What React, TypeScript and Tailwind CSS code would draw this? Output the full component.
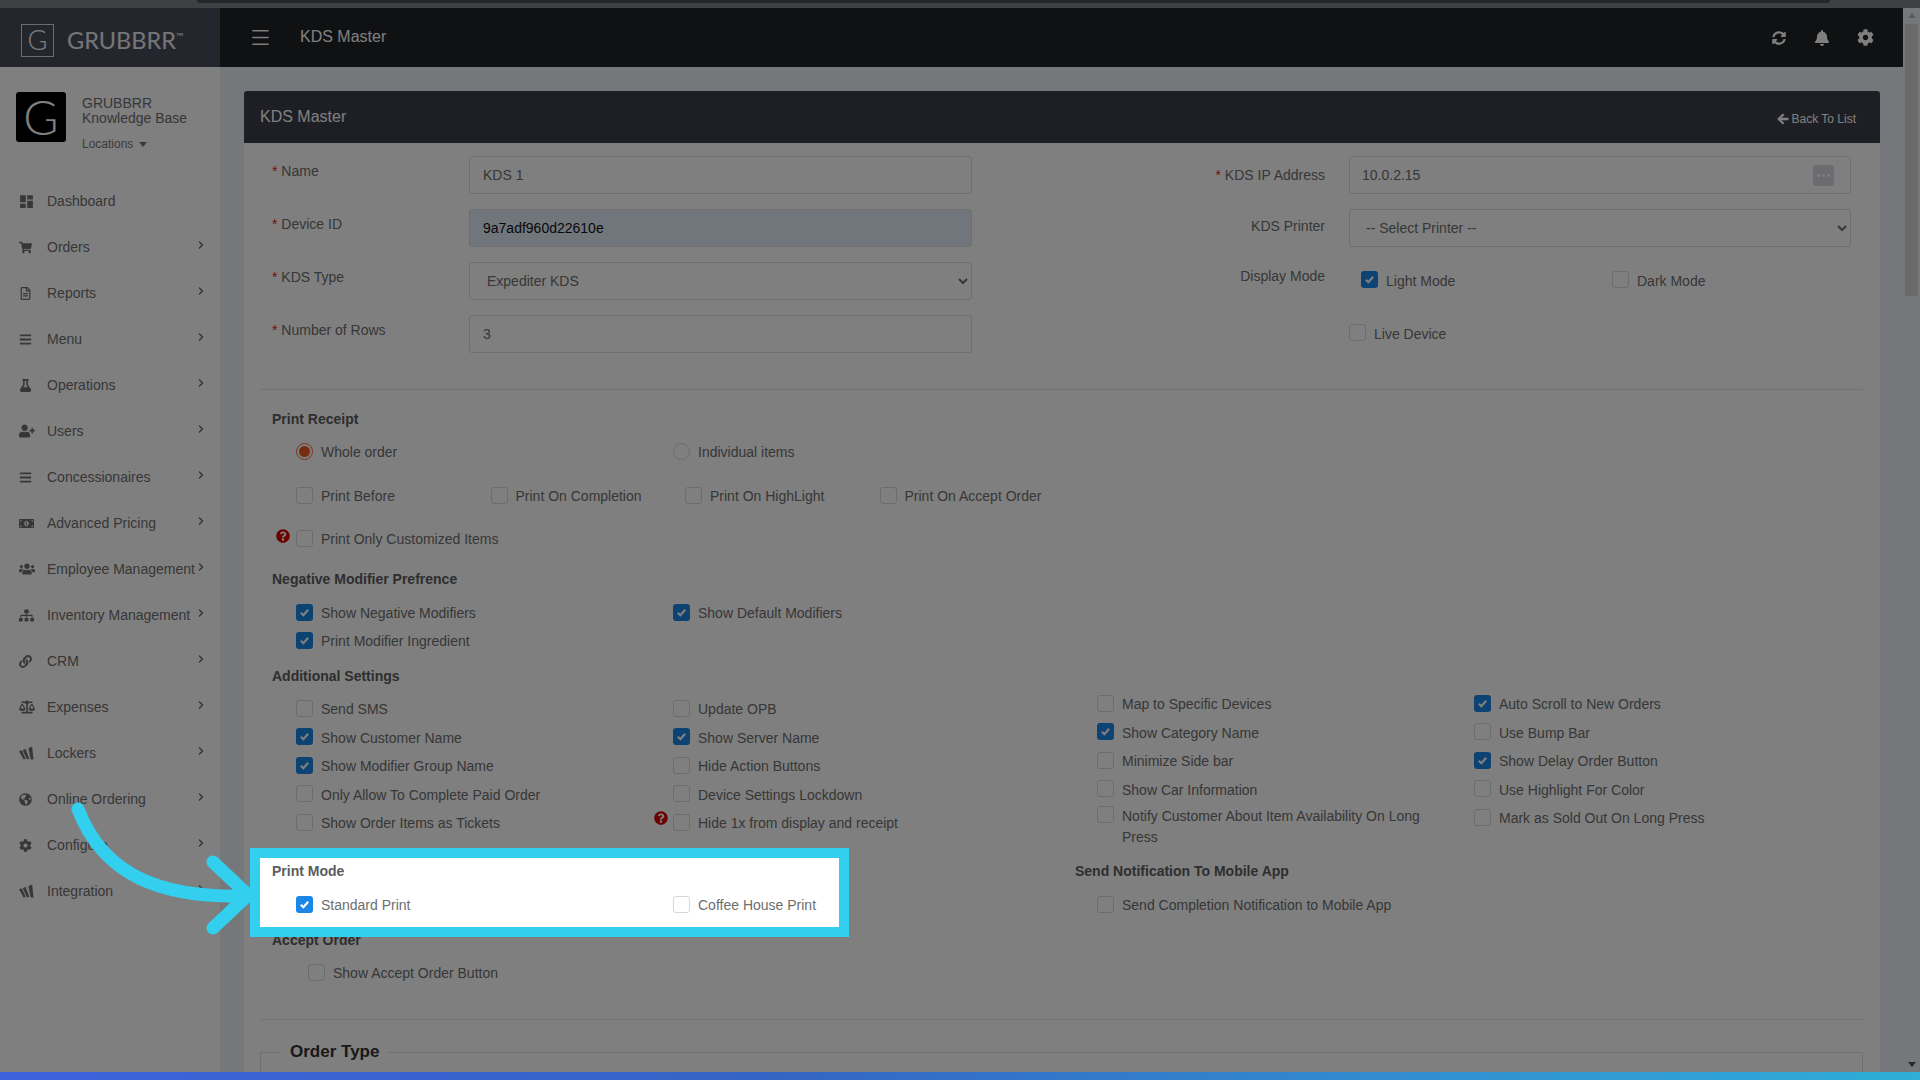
import React from "react";
import { ChevronRight, Menu } from "lucide-react";
import {
  FaArrowLeft,
  FaBalanceScale,
  FaBars,
  FaBell,
  FaCog,
  FaFlask,
  FaGlobeAmericas,
  FaLink,
  FaMoneyBillAlt,
  FaQuestionCircle,
  FaRegFileAlt,
  FaShoppingCart,
  FaSitemap,
  FaSyncAlt,
  FaUserPlus,
  FaUsers,
} from "react-icons/fa";
import { MdDashboard } from "react-icons/md";

const WIcon = () => (
  <svg viewBox="0 0 16 14" className="w-[15px] h-[14px]" fill="currentColor">
    <path d="M0 5 L3 4 L7 13 L5 14 Z" />
    <path d="M4 4 L7 2.5 L11 13 L8.5 14 Z" />
    <path d="M10 2 L14 0 L15.5 14 L12.5 14 Z" />
  </svg>
);

const navItems = [
  { label: "Dashboard", icon: <MdDashboard size={17} className="-ml-px" />, arrow: false },
  { label: "Orders", icon: <FaShoppingCart size={13} />, arrow: true },
  { label: "Reports", icon: <FaRegFileAlt size={13} />, arrow: true },
  { label: "Menu", icon: <FaBars size={13} />, arrow: true },
  { label: "Operations", icon: <FaFlask size={13} />, arrow: true },
  { label: "Users", icon: <FaUserPlus size={16} />, arrow: true },
  { label: "Concessionaires", icon: <FaBars size={13} />, arrow: true },
  { label: "Advanced Pricing", icon: <FaMoneyBillAlt size={15} />, arrow: true },
  { label: "Employee Management", icon: <FaUsers size={16} />, arrow: true },
  { label: "Inventory Management", icon: <FaSitemap size={15} />, arrow: true },
  { label: "CRM", icon: <FaLink size={13} />, arrow: true },
  { label: "Expenses", icon: <FaBalanceScale size={16} />, arrow: true },
  { label: "Lockers", icon: <WIcon />, arrow: true },
  { label: "Online Ordering", icon: <FaGlobeAmericas size={13} />, arrow: true },
  { label: "Configure", icon: <FaCog size={13} />, arrow: true },
  { label: "Integration", icon: <WIcon />, arrow: true },
];

const Check = ({ on = false }: { on?: boolean }) =>
  on ? (
    <span className="flex justify-center items-center bg-[#1b86e6] rounded-[3px] w-[17px] h-[17px] shrink-0">
      <svg viewBox="0 0 12 12" className="w-[11px] h-[11px]" fill="none" stroke="white" strokeWidth="2.4">
        <path d="M2 6.2 L4.8 9 L10 3" />
      </svg>
    </span>
  ) : (
    <span className="bg-white border border-[#d8d8d8] rounded-[3px] w-[17px] h-[17px] shrink-0" />
  );

const Radio = ({ on = false }: { on?: boolean }) => (
  <span
    className={`flex justify-center items-center rounded-full border w-[17px] h-[17px] shrink-0 ${
      on ? "border-[#f0673a]" : "border-[#d8d8d8]"
    }`}
  >
    {on && <span className="bg-[#f0591f] rounded-full w-[11px] h-[11px]" />}
  </span>
);

const Opt = ({ label, on }: { label: string; on?: boolean }) => (
  <div className="flex items-center gap-2 h-full">
    <Check on={on} />
    <span className="pt-[2px] text-[#6e6e6e] text-sm">{label}</span>
  </div>
);

const Heading = ({ children, className = "" }: { children: React.ReactNode; className?: string }) => (
  <div className={`flex items-center h-5 font-bold text-[#5c5c5c] text-sm ${className}`}>{children}</div>
);

const Req = ({ label }: { label: string }) => (
  <span className="text-[#6e6e6e] text-sm">
    <span className="text-[#e02020]">* </span>
    {label}
  </span>
);

const Field = ({ label, value, autofill }: { label: string; value: string; autofill?: boolean }) => (
  <div className="flex h-[53px]">
    <div className="pt-[3px] w-[197px]">
      <Req label={label} />
    </div>
    <input
      readOnly
      defaultValue={value}
      className={`pr-3 pl-[13px] border border-[#dedede] rounded-[3px] w-[503px] h-[38px] text-sm ${
        autofill ? "bg-[#e3ecf8] text-[#111]" : "bg-white text-[#6e6e6e]"
      }`}
    />
  </div>
);

const col1 = [
  { label: "Send SMS" },
  { label: "Show Customer Name", on: true },
  { label: "Show Modifier Group Name", on: true },
  { label: "Only Allow To Complete Paid Order" },
  { label: "Show Order Items as Tickets" },
];
const col2 = [
  { label: "Update OPB" },
  { label: "Show Server Name", on: true },
  { label: "Hide Action Buttons" },
  { label: "Device Settings Lockdown" },
];
const col3 = [
  { label: "Map to Specific Devices" },
  { label: "Show Category Name", on: true },
  { label: "Minimize Side bar" },
  { label: "Show Car Information" },
];
const col4 = [
  { label: "Auto Scroll to New Orders", on: true },
  { label: "Use Bump Bar" },
  { label: "Show Delay Order Button", on: true },
  { label: "Use Highlight For Color" },
  { label: "Mark as Sold Out On Long Press" },
];

const Sidebar = () => (
  <aside className="bg-white w-[220px] h-full shrink-0">
    <div className="flex items-center gap-[13px] bg-[#484c5c] pl-[21px] h-[59px]">
      <span className="flex justify-center items-center mt-[6px] border border-white/80 w-[33px] h-[33px] font-light text-[27px] text-white [font-family:Lato,sans-serif]">
        G
      </span>
      <span className="mt-[6px] text-[23.5px] text-white/90 [font-family:Lato,sans-serif]">
        GRUBBRR<sup className="top-[-9px] text-[10px]">™</sup>
      </span>
    </div>
    <div className="flex gap-4 pt-[25px] pl-4">
      <span className="flex justify-center items-center bg-black rounded-[3px] w-[50px] h-[50px] font-light text-[48px] text-white [font-family:Lato,sans-serif]">
        G
      </span>
      <div className="text-[#6e6e6e]">
        <div className="mt-1 text-sm leading-[15px]">GRUBBRR</div>
        <div className="text-sm leading-[15px]">Knowledge Base</div>
        <div className="flex items-center gap-[6px] mt-[11px] text-[#777] text-xs leading-[15px]">
          Locations
          <span className="border-x-[4px] border-x-transparent border-t-[5px] border-t-[#777]" />
        </div>
      </div>
    </div>
    <nav className="mt-[26px]">
      {navItems.map((item) => (
        <div key={item.label} className="flex items-center pl-[19px] h-[46px] text-[#6e6e6e]">
          <span className="flex items-center w-[28px] shrink-0">{item.icon}</span>
          <span className="text-sm whitespace-nowrap">{item.label}</span>
          {item.arrow && (
            <ChevronRight className="mt-[-4px] mr-[13px] ml-auto shrink-0" size={12} strokeWidth={3.2} />
          )}
        </div>
      ))}
    </nav>
  </aside>
);

const Form = () => (
  <div className="bg-white pt-[13px] pr-[17px] pl-4 h-[950px]">
    <div className="flex pl-3">
      <div>
        <Field label="Name" value="KDS 1" />
        <Field label="Device ID" value="9a7adf960d22610e" autofill />
        <div className="flex h-[53px]">
          <div className="pt-[3px] w-[197px]">
            <Req label="KDS Type" />
          </div>
          <select
            defaultValue="Expediter KDS"
            className="bg-white pl-[13px] border border-[#dedede] rounded-[3px] w-[503px] h-[38px] text-[#6e6e6e] text-sm"
          >
            <option>Expediter KDS</option>
          </select>
        </div>
        <Field label="Number of Rows" value="3" />
      </div>
      <div>
        <div className="flex h-[53px]">
          <div className="pt-[7px] w-[353px] text-right">
            <Req label="KDS IP Address" />
          </div>
          <div className="relative ml-6 w-[502px] h-[38px]">
            <input
              readOnly
              defaultValue="10.0.2.15"
              className="bg-white px-3 border border-[#dedede] rounded-[3px] w-full h-full text-[#6e6e6e] text-sm"
            />
            <span className="top-[9px] right-[17px] absolute flex justify-center items-center gap-[2px] bg-[#d6d9df] rounded-[3px] w-[21px] h-[21px]">
              <span className="bg-white rounded-full w-[3px] h-[3px]" />
              <span className="bg-white rounded-full w-[3px] h-[3px]" />
              <span className="bg-white rounded-full w-[3px] h-[3px]" />
            </span>
          </div>
        </div>
        <div className="flex h-[53px]">
          <div className="pt-[7px] w-[353px] text-[#6e6e6e] text-sm text-right">KDS Printer</div>
          <select
            defaultValue="-- Select Printer --"
            className="bg-white ml-6 pl-[12px] border border-[#dedede] rounded-[3px] w-[502px] h-[38px] text-[#6e6e6e] text-sm"
          >
            <option>-- Select Printer --</option>
          </select>
        </div>
        <div className="flex h-[53px]">
          <div className="pt-[4px] w-[353px] text-[#6e6e6e] text-sm text-right">Display Mode</div>
          <div className="pt-[7px] ml-[36px] w-[251px] h-[28px]">
            <Opt label="Light Mode" on />
          </div>
          <div className="pt-[7px] h-[28px]">
            <Opt label="Dark Mode" />
          </div>
        </div>
        <div className="flex h-[37px]">
          <div className="pt-[7px] ml-[377px] h-[28px]">
            <Opt label="Live Device" />
          </div>
        </div>
      </div>
    </div>

    <div className="bg-[#e6e6e6] mt-[21px] h-px" />

    <div className="pl-3">
      <Heading className="mt-[19px]">Print Receipt</Heading>
      <div className="flex mt-2 pl-6 h-7">
        <div className="flex items-center gap-2 w-[377px]">
          <Radio on />
          <span className="pt-[2px] text-[#6e6e6e] text-sm">Whole order</span>
        </div>
        <div className="flex items-center gap-2">
          <Radio />
          <span className="pt-[2px] text-[#6e6e6e] text-sm">Individual items</span>
        </div>
      </div>
      <div className="flex mt-4 pl-6 h-7">
        {["Print Before", "Print On Completion", "Print On HighLight", "Print On Accept Order"].map((l) => (
          <div key={l} className="w-[194.5px]">
            <Opt label={l} />
          </div>
        ))}
      </div>
      <div className="flex items-center mt-[15px] pl-1 h-7">
        <FaQuestionCircle className="mt-[-4px] mr-[6px] text-[#d40000]" size={14} />
        <Opt label="Print Only Customized Items" />
      </div>

      <Heading className="mt-[17px]">Negative Modifier Prefrence</Heading>
      <div className="flex mt-[9px] pl-6 h-7">
        <div className="w-[377px]">
          <Opt label="Show Negative Modifiers" on />
        </div>
        <Opt label="Show Default Modifiers" on />
      </div>
      <div className="pl-6 h-7">
        <Opt label="Print Modifier Ingredient" on />
      </div>

      <Heading className="mt-3">Additional Settings</Heading>
      <div className="flex pl-6 mt-[3px] h-[172px]">
        <div className="pt-[5px] w-[377px]">
          {col1.map((o) => (
            <div key={o.label} className="h-[28.5px]">
              <Opt {...o} />
            </div>
          ))}
        </div>
        <div className="relative pt-[5px] w-[424px]">
          {col2.map((o) => (
            <div key={o.label} className="h-[28.5px]">
              <Opt {...o} />
            </div>
          ))}
          <div className="relative h-[28.5px]">
            <FaQuestionCircle className="top-[3px] left-[-19px] absolute text-[#d40000]" size={14} />
            <Opt label="Hide 1x from display and receipt" />
          </div>
        </div>
        <div className="w-[377px]">
          {col3.map((o) => (
            <div key={o.label} className="h-[28.5px]">
              <Opt {...o} />
            </div>
          ))}
          <div className="flex gap-2 pt-[3px]">
            <Check />
            <span className="w-[310px] text-[#6e6e6e] text-sm leading-[21px]">
              Notify Customer About Item Availability On Long Press
            </span>
          </div>
        </div>
        <div>
          {col4.map((o) => (
            <div key={o.label} className="h-[28.5px]">
              <Opt {...o} />
            </div>
          ))}
        </div>
      </div>

      <div className="flex">
        <Heading className="w-[803px]">Print Mode</Heading>
        <Heading>Send Notification To Mobile App</Heading>
      </div>
      <div className="flex mt-[9px] pl-6 h-7">
        <div className="w-[377px]">
          <Opt label="Standard Print" on />
        </div>
        <div className="w-[424px]">
          <Opt label="Coffee House Print" />
        </div>
        <Opt label="Send Completion Notification to Mobile App" />
      </div>

      <Heading className="mt-3">Accept Order</Heading>
      <div className="mt-2 pl-9 h-7">
        <Opt label="Show Accept Order Button" />
      </div>
    </div>

    <div className="bg-[#e6e6e6] mt-[33px] h-px" />

    <fieldset className="mt-[20px] border border-[#dedede] h-[100px]">
      <legend className="ml-5 px-[9px] font-bold text-[#333] text-[17px] leading-6">Order Type</legend>
    </fieldset>
  </div>
);

export default function App() {
  return (
    <div className="relative flex flex-col bg-[#eceff5] h-screen overflow-hidden [font-family:'Liberation_Sans',Arial,sans-serif]">
      <div className="bg-[#7e8088] h-2 shrink-0">
        <div className="bg-[#4a4c54] ml-[197px] rounded-b-md w-[1633px] h-[3px]" />
      </div>

      <div className="flex flex-1 min-h-0">
        <Sidebar />
        <div className="flex flex-col flex-1 min-w-0">
          <header className="flex items-center bg-[#202226] h-[59px] text-white shrink-0">
            <Menu className="ml-[29px]" size={23} strokeWidth={1.5} />
            <span className="mt-[-2px] ml-[28px] text-base">KDS Master</span>
            <div className="flex items-center gap-[27px] mr-[29px] ml-auto">
              <FaSyncAlt size={14} className="mr-px" />
              <FaBell size={16} />
              <FaCog size={17} />
            </div>
          </header>
          <main className="flex-1 pt-6 pr-[23px] pl-6 min-h-0 overflow-hidden">
            <div className="flex justify-between items-center bg-[#3c3e4a] pr-6 pl-4 rounded-t-[3px] h-[52px] text-white">
              <span className="text-base">KDS Master</span>
              <span className="flex items-center gap-[3px] mt-[3px] text-xs">
                <FaArrowLeft size={12} className="stroke-current stroke-[30px]" />
                Back To List
              </span>
            </div>
            <Form />
          </main>
        </div>
        <div className="flex flex-col items-center bg-[#eceef2] w-[17px] shrink-0">
          <span className="mt-[5px] border-x-[4px] border-x-transparent border-b-[5px] border-b-[#b5b5b5]" />
          <div className="bg-[#d4d4d4] mt-[6px] w-[13px] h-[272px]" />
          <span className="mt-auto mb-[13px] border-x-[4px] border-x-transparent border-t-[5px] border-t-[#505050]" />
        </div>
      </div>

      {/* spotlight frame, dims everything around it */}
      <div className="top-[848px] left-[250px] absolute border-[#33cfee] border-[10px] w-[599px] h-[89px] shadow-[0_0_0_3000px_rgba(0,0,0,0.5)]" />

      <svg className="top-0 left-0 absolute w-[300px] h-[1000px]" viewBox="0 0 300 1000" fill="none">
        <path
          d="M78 809 C104 878 165 898 245 896 M213 862 L248 895 L213 928"
          stroke="#33cfee"
          strokeWidth="13"
          strokeLinecap="round"
          strokeLinejoin="miter"
        />
      </svg>

      <div className="right-0 bottom-0 left-0 absolute bg-gradient-to-r from-[#3e62dc] via-[#3464c4] via-40% to-[#2eaed8] h-2" />
    </div>
  );
}
